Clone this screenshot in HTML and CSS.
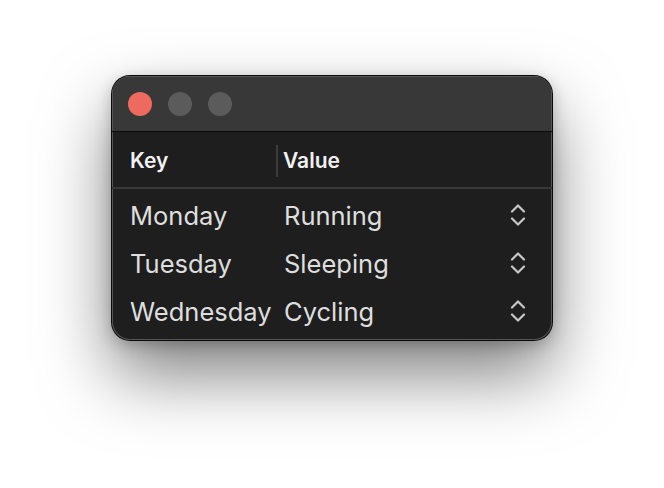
FILE: index.html
```html
<!DOCTYPE html>
<html>
<head>
<meta charset="utf-8">
<link rel="stylesheet" href="styles.css">
</head>
<body>
<div class="window">
  <div class="titlebar">
    <span class="light red"></span>
    <span class="light"></span>
    <span class="light"></span>
  </div>
  <div class="header">
    <div class="hcell key">Key</div>
    <div class="hcell value">Value</div>
  </div>
  <div class="rows">
    <div class="row">
      <div class="cell key">Monday</div>
      <div class="cell value">Running</div>
      <svg class="stepper" width="16" height="22" viewBox="0 0 16 22"><path d="M2 7.5 L8 1.5 L14 7.5 M2 14.5 L8 20.5 L14 14.5" fill="none" stroke="#c8c8c8" stroke-width="2.2" stroke-linecap="round" stroke-linejoin="round"/></svg>
    </div>
    <div class="row">
      <div class="cell key">Tuesday</div>
      <div class="cell value">Sleeping</div>
      <svg class="stepper" width="16" height="22" viewBox="0 0 16 22"><path d="M2 7.5 L8 1.5 L14 7.5 M2 14.5 L8 20.5 L14 14.5" fill="none" stroke="#c8c8c8" stroke-width="2.2" stroke-linecap="round" stroke-linejoin="round"/></svg>
    </div>
    <div class="row">
      <div class="cell key">Wednesday</div>
      <div class="cell value">Cycling</div>
      <svg class="stepper" width="16" height="22" viewBox="0 0 16 22"><path d="M2 7.5 L8 1.5 L14 7.5 M2 14.5 L8 20.5 L14 14.5" fill="none" stroke="#c8c8c8" stroke-width="2.2" stroke-linecap="round" stroke-linejoin="round"/></svg>
    </div>
  </div>
</div>
</body>
</html>
```
FILE: styles.css
```css
html, body {
  margin: 0;
  padding: 0;
  background: #ffffff;
}
html {
  height: 100%;
}
body {
  box-sizing: border-box;
  min-height: 488px;
  padding: 76px 0 0 112px;
  font-family: "Inter", "Liberation Sans", sans-serif;
}
.window {
  box-sizing: border-box;
  width: 440px;
  height: 264px;
  border-radius: 18px;
  background: #1e1e1e;
  overflow: hidden;
  box-shadow: 0 0 0 1px #0a0a0a, inset 0 0 0 1px #555, 0 34px 70px rgba(0,0,0,0.5), 0 4px 16px rgba(0,0,0,0.25);
}
.titlebar {
  height: 55px;
  background: #383838;
  border-bottom: 1px solid #0c0c0c;
  display: flex;
  align-items: center;
  padding-left: 16px;
  gap: 16px;
  box-shadow: inset 0 1px 0 #555, inset 1px 0 0 #555, inset -1px 0 0 #555;
}
.light {
  width: 24px;
  height: 24px;
  border-radius: 50%;
  background: #5b5b5b;
}
.light.red {
  background: #ec6a5e;
}
.header {
  box-sizing: border-box;
  height: 57px;
  padding-top: 2px;
  border-bottom: 2px solid #383838;
  display: flex;
  align-items: center;
  color: #f2f2f2;
  font-weight: 600;
  font-size: 21px;
}
.hcell.key {
  width: 146px;
  padding-left: 18px;
  height: 32px;
  line-height: 32px;
  border-right: 2px solid #3d3d3d;
}
.hcell.value {
  padding-left: 5px;
}
.rows {
  padding-top: 2px;
}
.row {
  height: 48px;
  display: flex;
  align-items: center;
  color: #dedede;
  font-size: 25.5px;
}
.cell.key {
  width: 154px;
  padding-left: 18px;
}
.cell.value {
  flex: 1;
}
.stepper {
  margin-right: 26px;
}
```
